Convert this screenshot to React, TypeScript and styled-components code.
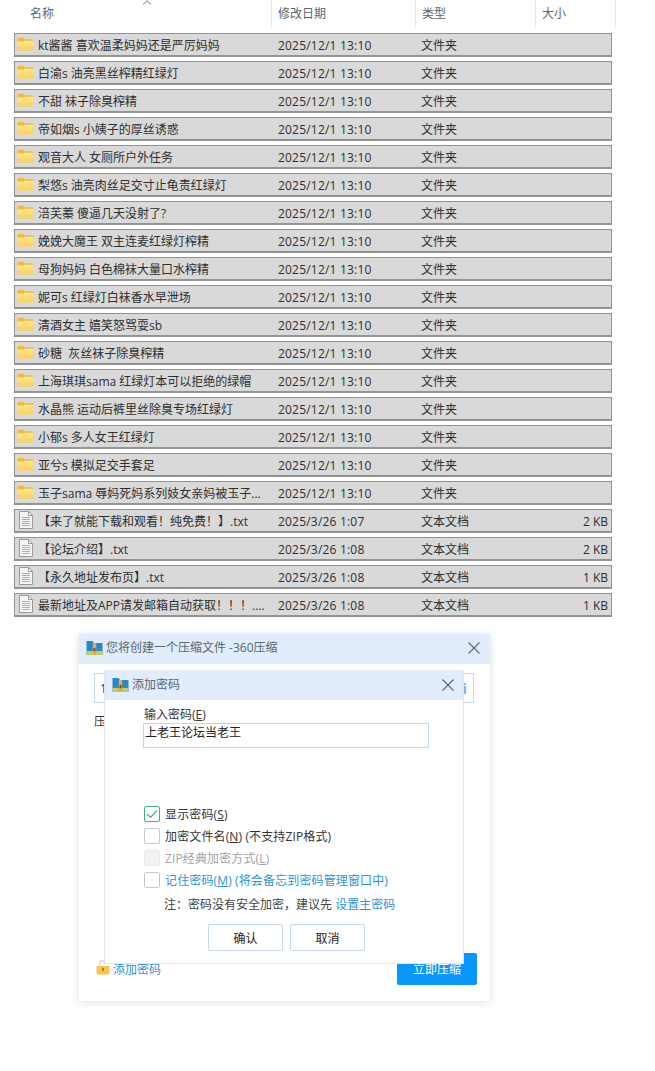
import React from 'react'
import styled, { createGlobalStyle } from 'styled-components'

const FONT = `"Open Sans", "Noto Sans CJK SC", sans-serif`

const GlobalStyle = createGlobalStyle`
    html, body {
        margin: 0;
        padding: 0;
        height: 100%;
        overflow: hidden;
        background: #fff;
        font-family: ${FONT};
        font-size: 12px;
    }
`
const Page = styled.div`
    width: 655px;
    height: 1071px;
    overflow: hidden;
`
const HeaderBar = styled.div`
    position: relative;
    display: grid;
    grid-template-columns: 272px 144px 120px 80px;
    height: 27px;
    color: #5b6470;
`
const HeaderCell = styled.div<{ $first?: boolean }>`
    display: flex;
    align-items: center;
    padding-left: ${(p) => (p.$first ? 30 : 6)}px;
    border-right: 1px solid #e8e8e8;
    line-height: 27px;
`
const SortArrow = styled.svg`
    position: absolute;
    left: 142px;
    top: 0;
`
const List = styled.div`
    display: flex;
    flex-direction: column;
    gap: 4px;
    width: 598px;
    margin: 6px 0 0 14px;
`
const Row = styled.div`
    box-sizing: border-box;
    display: grid;
    grid-template-columns: 263px 143px 114px 1fr;
    align-items: center;
    height: 24px;
    padding-top: 2px;
    border: 1px solid #939393;
    border-bottom-width: 2px;
    background: #d9d9d9;
    color: #2e2e2e;
    line-height: 18px;
`
const NameCell = styled.div`
    display: flex;
    align-items: center;
    gap: 4px;
    padding-left: 2px;
    white-space: pre;
`
const IconSlot = styled.span`
    display: flex;
    flex: none;
    justify-content: center;
    width: 17px;
    margin-top: -4px;
`
const DateCell = styled.div`
    letter-spacing: 0.2px;
`
const SizeCell = styled.div`
    padding-right: 3px;
    text-align: right;
`
const Stage = styled.div`
    position: relative;
    width: 411px;
    height: 367px;
    margin: 17px 0 0 79px;
    background: #fff;
    box-shadow: 0 1px 8px rgba(90, 110, 140, 0.22);
`
const TitleBar = styled.div<{ $main?: boolean }>`
    box-sizing: border-box;
    display: flex;
    align-items: center;
    gap: 3px;
    height: 30px;
    padding: 0 ${(p) => (p.$main ? 9 : 8)}px ${(p) => (p.$main ? 3 : 0)}px 7px;
    background: #e1edfb;
    color: #5a6572;
`
const TitleText = styled.span`
    flex: 1;
    line-height: 1;
`
const OuterBody = styled.div`
    display: flex;
    flex-direction: column;
    height: 337px;
    padding: 9px 13px 16px 15px;
    box-sizing: border-box;
`
const PathBox = styled.div`
    box-sizing: border-box;
    display: flex;
    justify-content: space-between;
    align-items: center;
    width: 380px;
    height: 30px;
    padding: 0 6px 0 5px;
    border: 1px solid #c5d8e8;
    color: #333;
`
const InfoMark = styled.span`
    color: #86aee4;
    font-weight: 700;
    font-size: 15px;
`
const FormatLine = styled.div`
    margin-top: 11px;
    color: #333;
    line-height: 16px;
`
const Footer = styled.div`
    display: flex;
    align-items: center;
    justify-content: space-between;
    margin-top: auto;
`
const AddPassword = styled.div`
    display: flex;
    align-items: center;
    gap: 3px;
    padding: 2px 0 0 2px;
    color: #2f8fd6;
    line-height: 16px;
`
const LockSlot = styled.span`
    position: relative;
    z-index: 1;
    display: flex;
    margin-top: -6px;
`
const PrimaryButton = styled.button`
    width: 80px;
    height: 32px;
    border: 0;
    border-radius: 2px;
    background: #0a96ff;
    color: #fff;
    font: inherit;
`
const Overlay = styled.div`
    position: absolute;
    left: 25px;
    top: 36px;
    box-sizing: border-box;
    width: 360px;
    height: 294px;
    border: 1px solid #dfe6f3;
    border-top: 0;
    background: #fff;
`
const Form = styled.div`
    display: flex;
    flex-direction: column;
    padding: 6px 34px 0 38px;
`
const FieldLabel = styled.div`
    color: #333;
    line-height: 17px;
    padding-left: 1px;
`
const PasswordInput = styled.div`
    box-sizing: border-box;
    width: 286px;
    height: 25px;
    padding-left: 1px;
    border: 1px solid #c3d8e6;
    color: #222;
    line-height: 18px;
`
const Options = styled.div`
    display: flex;
    flex-direction: column;
    gap: 4px;
    margin-top: 57px;
`
const Option = styled.div<{ $tone?: 'muted' | 'link' }>`
    display: flex;
    align-items: center;
    gap: 5px;
    height: 18px;
    padding-left: 1px;
    color: ${(p) => (p.$tone === 'muted' ? '#a3a3a3' : p.$tone === 'link' ? '#2e93d9' : '#333')};
    letter-spacing: 0.13px;
    white-space: nowrap;
`
const Box = styled.span<{ $checked?: boolean; $disabled?: boolean }>`
    box-sizing: border-box;
    display: flex;
    flex: none;
    align-items: center;
    justify-content: center;
    width: 16px;
    height: 16px;
    border: 1px solid ${(p) => (p.$checked ? '#3cb371' : p.$disabled ? '#e8e8e8' : '#c9c9c9')};
    border-radius: 2px;
    background: ${(p) => (p.$disabled ? '#f2f2f2' : '#fff')};
`
const Note = styled.div`
    margin: 7px 0 0 21px;
    color: #444;
    line-height: 17px;
    white-space: nowrap;
`
const Link = styled.span`
    color: #2e93d9;
`
const Actions = styled.div`
    display: flex;
    gap: 7px;
    margin: 11px 0 0 65px;
`
const GhostButton = styled.button`
    width: 75px;
    height: 27px;
    border: 1px solid #c8d8e6;
    border-radius: 2px;
    background: #fff;
    color: #222;
    font: inherit;
`
const U = styled.span`
    text-decoration: underline;
`

const FolderIcon = () => (
    <svg width="17" height="14" viewBox="0 0 17 14">
        <defs>
            <linearGradient id="folderFront" x1="0" y1="0" x2="0" y2="1">
                <stop offset="0" stopColor="#ffe88f" />
                <stop offset="1" stopColor="#fbcf55" />
            </linearGradient>
        </defs>
        <path d="M0.5 2C0.5 1.2 1 0.7 1.8 0.7H6L7.6 2.2H15.2C16 2.2 16.5 2.8 16.5 3.6V5.5H0.5Z" fill="#f2b93b" />
        <path d="M0.5 4.4H7L8 3.7H16.5V12.4C16.5 13 16 13.5 15.4 13.5H1.6C1 13.5 0.5 13 0.5 12.4Z" fill="url(#folderFront)" />
    </svg>
)

const DocIcon = () => (
    <svg width="14" height="18" viewBox="0 0 14 18" fill="none">
        <path d="M0.5 0.5H9.5L13.5 4.5V17.5H0.5Z" fill="#f6f6f6" stroke="#9a9a9a" />
        <path d="M9.5 0.5V4.5H13.5" stroke="#9a9a9a" />
        <path d="M3 6.5H11M3 8.5H11M3 10.5H11M3 12.5H11M3 14.5H11" stroke="#b0b0b0" />
    </svg>
)

const ZipIcon = () => (
    <svg width="17" height="16" viewBox="0 0 17 16">
        <path d="M0.5 1H6.5L8 3H16.5V15H0.5Z" fill="#2f86c9" />
        <rect x="0.5" y="11" width="16" height="4" fill="#c3cc62" />
        <rect x="6.8" y="3" width="3.4" height="12" fill="#e5ae45" />
        <rect x="7.5" y="8" width="2" height="3.4" fill="#7d5217" />
    </svg>
)

const CloseIcon = () => (
    <svg width="14" height="14" viewBox="0 0 14 14" stroke="#5f6670" strokeWidth="1.1">
        <path d="M1.5 1.5L12.5 12.5M12.5 1.5L1.5 12.5" />
    </svg>
)

const LockIcon = () => (
    <svg width="14" height="15" viewBox="0 0 14 15" fill="none">
        <path d="M3.5 7V3.5C3.5 1.8 4.6 0.8 6 0.8C7 0.8 7.8 1.3 8.2 2.2" stroke="#dcdcdc" strokeWidth="1.4" />
        <rect x="0.5" y="6" width="13" height="8.5" rx="1" fill="#f8c552" />
        <rect x="6" y="8" width="2" height="3" fill="#b98416" />
    </svg>
)

const CheckMark = () => (
    <svg width="12" height="10" viewBox="0 0 12 10" fill="none" stroke="#3cb371" strokeWidth="1.2">
        <path d="M1 5L4.5 8.5L11 1.5" />
    </svg>
)

const folders = [
    'kt酱酱 喜欢温柔妈妈还是严厉妈妈',
    '白渝s 油亮黑丝榨精红绿灯',
    '不甜 袜子除臭榨精',
    '帝如烟s 小姨子的厚丝诱惑',
    '观音大人 女厕所户外任务',
    '梨悠s 油亮肉丝足交寸止龟责红绿灯',
    '涪芙蓁 傻逼几天没射了?',
    '娩娩大魔王 双主连麦红绿灯榨精',
    '母狗妈妈 白色棉袜大量口水榨精',
    '妮可s 红绿灯白袜香水早泄场',
    '清酒女主 嬉笑怒骂耍sb',
    '砂糖  灰丝袜子除臭榨精',
    '上海琪琪sama 红绿灯本可以拒绝的绿帽',
    '水晶熊 运动后裤里丝除臭专场红绿灯',
    '小郁s 多人女王红绿灯',
    '亚兮s 模拟足交手套足',
    '玉子sama 辱妈死妈系列妓女亲妈被玉子...',
]

const documents = [
    { name: '【来了就能下载和观看！纯免费！】.txt', date: '2025/3/26 1:07', size: '2 KB' },
    { name: '【论坛介绍】.txt', date: '2025/3/26 1:08', size: '2 KB' },
    { name: '【永久地址发布页】.txt', date: '2025/3/26 1:08', size: '1 KB' },
    { name: '最新地址及APP请发邮箱自动获取！！！....', date: '2025/3/26 1:08', size: '1 KB' },
]

const App = () => {
    return (
        <Page>
            <GlobalStyle />
            <HeaderBar>
                <HeaderCell $first>名称</HeaderCell>
                <HeaderCell>修改日期</HeaderCell>
                <HeaderCell>类型</HeaderCell>
                <HeaderCell>大小</HeaderCell>
                <SortArrow width="10" height="5" viewBox="0 0 10 5" fill="none" stroke="#7a7a7a">
                    <path d="M1 4.5L5 0.8L9 4.5" />
                </SortArrow>
            </HeaderBar>
            <List>
                {folders.map((name) => (
                    <Row key={name}>
                        <NameCell>
                            <IconSlot>
                                <FolderIcon />
                            </IconSlot>
                            {name}
                        </NameCell>
                        <DateCell>2025/12/1 13:10</DateCell>
                        <div>文件夹</div>
                        <SizeCell />
                    </Row>
                ))}
                {documents.map((doc) => (
                    <Row key={doc.name}>
                        <NameCell>
                            <IconSlot>
                                <DocIcon />
                            </IconSlot>
                            {doc.name}
                        </NameCell>
                        <DateCell>{doc.date}</DateCell>
                        <div>文本文档</div>
                        <SizeCell>{doc.size}</SizeCell>
                    </Row>
                ))}
            </List>
            <Stage>
                <TitleBar $main>
                    <ZipIcon />
                    <TitleText>您将创建一个压缩文件 -360压缩</TitleText>
                    <CloseIcon />
                </TitleBar>
                <OuterBody>
                    <PathBox>
                        <span>1</span>
                        <InfoMark>i</InfoMark>
                    </PathBox>
                    <FormatLine>压</FormatLine>
                    <Footer>
                        <AddPassword>
                            <LockSlot>
                                <LockIcon />
                            </LockSlot>
                            添加密码
                        </AddPassword>
                        <PrimaryButton>立即压缩</PrimaryButton>
                    </Footer>
                </OuterBody>
                <Overlay>
                    <TitleBar>
                        <ZipIcon />
                        <TitleText>添加密码</TitleText>
                        <CloseIcon />
                    </TitleBar>
                    <Form>
                        <FieldLabel>
                            输入密码(<U>E</U>)
                        </FieldLabel>
                        <PasswordInput>上老王论坛当老王</PasswordInput>
                        <Options>
                            <Option>
                                <Box $checked>
                                    <CheckMark />
                                </Box>
                                <span>
                                    显示密码(<U>S</U>)
                                </span>
                            </Option>
                            <Option>
                                <Box />
                                <span>
                                    加密文件名(<U>N</U>) (不支持ZIP格式)
                                </span>
                            </Option>
                            <Option $tone="muted">
                                <Box $disabled />
                                <span>
                                    ZIP经典加密方式(<U>L</U>)
                                </span>
                            </Option>
                            <Option $tone="link">
                                <Box />
                                <span>
                                    记住密码(<U>M</U>) (将会备忘到密码管理窗口中)
                                </span>
                            </Option>
                        </Options>
                        <Note>
                            注：密码没有安全加密，建议先 <Link>设置主密码</Link>
                        </Note>
                        <Actions>
                            <GhostButton>确认</GhostButton>
                            <GhostButton>取消</GhostButton>
                        </Actions>
                    </Form>
                </Overlay>
            </Stage>
        </Page>
    )
}

export default App
